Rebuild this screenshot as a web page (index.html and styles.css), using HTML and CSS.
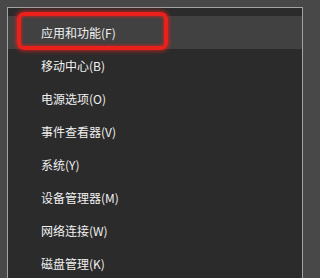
FILE: index.html
```html
<!DOCTYPE html>
<html lang="zh-CN">
<head>
<meta charset="utf-8">
<title>Win+X 菜单</title>
<link rel="stylesheet" href="styles.css">
</head>
<body>
<div class="screen">
  <div class="menu">
    <ul class="items">
      <li class="item hover">应用和功能(F)</li>
      <li class="item">移动中心(B)</li>
      <li class="item">电源选项(O)</li>
      <li class="item">事件查看器(V)</li>
      <li class="item">系统(Y)</li>
      <li class="item">设备管理器(M)</li>
      <li class="item">网络连接(W)</li>
      <li class="item">磁盘管理(K)</li>
    </ul>
  </div>
  <div class="mark"></div>
</div>
</body>
</html>
```
FILE: styles.css
```css
html, body {
  margin: 0;
  padding: 0;
  background: #484849;
}
.screen {
  position: relative;
  width: 316px;
  height: 278px;
  overflow: hidden;
  background: #484849;
  box-sizing: border-box;
  padding: 7px 0 0 7px;
}
.menu {
  width: 296px;
  height: 280px;
  box-sizing: border-box;
  background: #2b2b2b;
  border: 1px solid #a3a3a3;
  border-bottom: none;
  padding-top: 8px;
}
.items {
  list-style: none;
  margin: 0;
  padding: 0;
}
.item {
  height: 33px;
  line-height: 33px;
  padding-left: 33px;
  font-family: "Noto Sans CJK SC", "Noto Sans", sans-serif;
  font-size: 12px;
  color: #f0f0f0;
  white-space: nowrap;
}
.item.hover {
  background: #414141;
}
.mark {
  position: absolute;
  left: 17px;
  top: 12px;
  width: 151px;
  height: 38px;
  box-sizing: border-box;
  border: 4px solid #ea211b;
  border-radius: 7px;
  box-shadow: 0 0 4px 1px rgba(234, 33, 27, 0.75), inset 0 0 3px 1px rgba(234, 33, 27, 0.6);
}
```
